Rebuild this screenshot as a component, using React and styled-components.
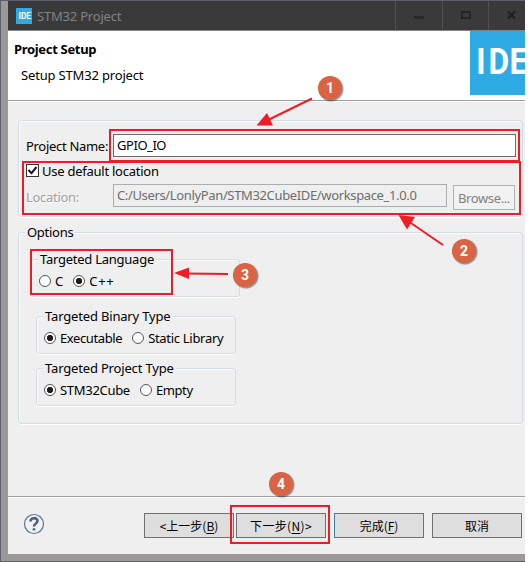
import React from 'react';
import styled, { createGlobalStyle } from 'styled-components';

const Global = createGlobalStyle`
  * { box-sizing: border-box; }
  body { margin: 0; background: #fff; }
`;

const Window = styled.main`
  position: relative;
  width: 525px;
  height: 562px;
  overflow: hidden;
  display: flex;
  flex-direction: column;
  background: #efefef;
  border: solid #5d606a;
  border-width: 1px 0 1px 1px;
  font: 13px/18px 'Noto Sans', 'Noto Sans CJK SC', sans-serif;
  color: #000;
`;

const Frame = styled.div`
  flex: 1;
  display: flex;
  flex-direction: column;
  border: solid #9b9898;
  border-width: 0 0 7px 7px;
`;

const TitleBar = styled.header`
  height: 30px;
  display: flex;
  align-items: center;
  background: #3a3a3a;
  border-bottom: 1px solid #838383;
  padding-left: 8px;
`;

const Text = styled.span`
  display: block;
  white-space: pre;
  flex: none;
  letter-spacing: ${(p) => p.$track || 0}px;
`;

const Title = styled(Text)`
  flex: 1;
  margin-left: 5px;
  color: #828282;
`;

const WindowControl = styled.div`
  width: ${(p) => p.$w}px;
  height: 29px;
  flex: none;
  border-left: 1px solid #4d5054;
  svg { display: block; }
`;

const Banner = styled.section`
  height: 70px;
  display: flex;
  justify-content: space-between;
  background: #fff;
  border-bottom: 1px solid #a0a0a0;
  box-shadow: 0 1px #fff;
`;

const BannerText = styled.div`
  padding: 9px 0 0 6px;
`;

const Heading = styled.h1`
  margin: 0 0 8px;
  font-size: 13px;
  line-height: 18px;
  font-weight: 700;
  letter-spacing: ${(p) => p.$track}px;
`;

const Subheading = styled(Text)`
  margin-left: 7px;
`;

const Body = styled.section`
  height: 395px;
  padding: 19px 1px 0 10px;
`;

const Group = styled.div`
  position: relative;
  width: ${(p) => p.$w}px;
  height: ${(p) => p.$h}px;
  margin: ${(p) => p.$m || '0'};
  padding: ${(p) => p.$p || '0'};
  border: 1px solid #d3dde3;
  border-radius: 3px;
  box-shadow: 0 1px #fff, inset 1px 1px #fafafa;
`;

const Legend = styled(Text)`
  position: absolute;
  top: -10px;
  left: 6px;
  padding: 0 2px;
  background: #efefef;
`;

const Row = styled.div`
  display: flex;
  height: ${(p) => p.$h}px;
  align-items: center;
`;

const Cell = styled.div`
  width: 87px;
  flex: none;
  padding-top: ${(p) => p.$drop || 0}px;
`;

const Field = styled.div`
  width: ${(p) => p.$w}px;
  height: 23px;
  padding: 1px 0 0 3px;
  border: 1px solid ${(p) => (p.$off ? '#abaeb0' : '#6b6b6b')};
  background: ${(p) => (p.$off ? '#efefef' : '#fff')};
  color: ${(p) => (p.$off ? '#6d6d6d' : '#000')};
`;

const Disabled = styled(Text)`
  color: #a0a0a0;
  text-shadow: 1px 1px #fff;
`;

const BrowseButton = styled.div`
  width: 62px;
  height: 25px;
  margin: 4px 0 0 6px;
  padding: 3px 0 0 4px;
  border: 1px solid #b0b3b4;
  background: #f2f2f2;
  color: #838383;
`;

const Check = styled.div`
  width: 13px;
  height: 13px;
  margin-right: 3px;
  border: 1px solid #333;
  background: #fff;
  svg { display: block; }
`;

const Radio = styled.div`
  width: 12px;
  height: 12px;
  flex: none;
  margin: 0 4px 0 ${(p) => p.$gap || 0}px;
  border: 1px solid #555;
  border-radius: 50%;
  background: ${(p) => (p.$on ? 'radial-gradient(circle, #1c1c1c 2.8px, #fff 3.5px)' : '#fff')};
`;

const Footer = styled.footer`
  flex: 1;
  display: flex;
  border-top: 1px solid #a0a0a0;
  box-shadow: inset 0 1px #fff;
  padding: 16px 0 0 15px;
`;

const Help = styled.svg`
  width: 22px;
  height: 22px;
  margin: 0 99px 0 0;
`;

const Button = styled.div`
  width: 90px;
  height: 25px;
  margin-right: ${(p) => p.$gap}px;
  display: flex;
  justify-content: center;
  align-items: center;
  flex: none;
  border: 1px solid ${(p) => (p.$primary ? '#3c7fb1' : '#707070')};
  background: #dedede;
  font: 12px/18px 'Noto Sans CJK SC', sans-serif;
  u { text-underline-offset: 2px; }
`;

const Overlay = styled.svg`
  position: absolute;
  left: -1px;
  top: -1px;
  pointer-events: none;
`;

const Badge = styled.div`
  position: absolute;
  left: ${(p) => p.$x - 13}px;
  top: ${(p) => p.$y - 13}px;
  width: 24px;
  height: 24px;
  border-radius: 50%;
  background: #d96343;
  box-shadow: 1px 1px 1px 0.5px rgba(0, 0, 0, 0.4);
  color: #fff;
  font: 700 14px/24px Roboto, sans-serif;
  text-align: center;
`;

const Logo = () => (
  <svg width="55" height="64" viewBox="0 0 55 64">
    <rect width="55" height="64" fill="#2eaae4" />
    <text x="7.3 21.2 45.4" y="43" transform="scale(.87 1)" fill="#fff" fontFamily="Roboto, sans-serif" fontWeight="700" fontSize="36.5">IDE</text>
  </svg>
);

const badges = [[330, 88], [464, 251], [245, 275], [281, 484]];

export default function App() {
  return (
    <Window>
      <Global />
      <Frame>
        <TitleBar>
          <svg width="16" height="16" viewBox="0 0 16 16">
            <rect width="16" height="16" fill="#2eaae4" />
            <text x="2.5" y="11" fill="#fff" fontFamily="Roboto, sans-serif" fontWeight="700" fontSize="9" textLength="12.5" lengthAdjust="spacingAndGlyphs">IDE</text>
          </svg>
          <Title $track={-0.2}>STM32 Project</Title>
          <WindowControl $w={47}>
            <svg width="46" height="29"><path d="M18 16.5h10" stroke="#292929" strokeWidth="3" /></svg>
          </WindowControl>
          <WindowControl $w={46}>
            <svg width="45" height="29"><rect x="19" y="11" width="8" height="6" fill="none" stroke="#242424" strokeWidth="2" /></svg>
          </WindowControl>
          <WindowControl $w={37}>
            <svg width="36" height="29"><path d="M19 10.5l7 7M26 10.5l-7 7" stroke="#202020" strokeWidth="2.4" /></svg>
          </WindowControl>
        </TitleBar>
        <Banner>
          <BannerText>
            <Heading $track={-0.32}>Project Setup</Heading>
            <Subheading $track={-0.17}>Setup STM32 project</Subheading>
          </BannerText>
          <Logo />
        </Banner>
        <Body>
          <Group $w={505} $h={97} $p="13px 0 0 7px">
            <Row $h={23}>
              <Cell><Text $track={-0.3}>Project Name:</Text></Cell>
              <Field $w={403}><Text $track={-0.45}>GPIO_IO</Text></Field>
            </Row>
            <Row $h={27}>
              <Check>
                <svg width="11" height="11"><path d="M1.5 5l3 3.2L9.500 2" fill="none" stroke="#1a1a1a" strokeWidth="2" /></svg>
              </Check>
              <Text $track={-0.25}>Use default location</Text>
            </Row>
            <Row $h={23}>
              <Cell $drop={3}><Disabled $track={-0.3}>Location:</Disabled></Cell>
              <Field $w={334} $off><Text $track={-0.355}>C:/Users/LonlyPan/STM32CubeIDE/workspace_1.0.0</Text></Field>
              <BrowseButton><Text $track={-0.38}>Browse...</Text></BrowseButton>
            </Row>
          </Group>
          <Group $w={505} $h={192} $m="15px 0 0" $p="26px 0 0 12px">
            <Legend $track={-0.28}>Options</Legend>
            <Group $w={209} $h={38} $p="15px 0 0 7px">
              <Legend $track={-0.25}>Targeted Language</Legend>
              <Row $h={12}>
                <Radio /><Text>C</Text>
                <Radio $gap={10} $on /><Text $track={0.7}>C++</Text>
              </Row>
            </Group>
            <Group $w={200} $h={38} $m="19px 0 0 5px" $p="15px 0 0 7px">
              <Legend $track={-0.17}>Targeted Binary Type</Legend>
              <Row $h={12}>
                <Radio $on /><Text $track={-0.4}>Executable</Text>
                <Radio $gap={10} /><Text $track={-0.3}>Static Library</Text>
              </Row>
            </Group>
            <Group $w={200} $h={38} $m="14px 0 0 5px" $p="15px 0 0 7px">
              <Legend $track={-0.17}>Targeted Project Type</Legend>
              <Row $h={12}>
                <Radio $on /><Text $track={-0.3}>STM32Cube</Text>
                <Radio $gap={10} /><Text $track={-0.4}>Empty</Text>
              </Row>
            </Group>
          </Group>
        </Body>
        <Footer>
          <Help viewBox="0 0 22 22">
            <circle cx="11" cy="11" r="9.5" fill="#f1f2f4" stroke="#627590" strokeWidth="1.2" />
            <path d="M7.5 8.5C7.5 4 14.5 4.3 14.5 8C14.5 10.5 11 10.5 11 13.5M11 15.300v2.200" fill="none" stroke="#4c6384" strokeWidth="2.6" />
          </Help>
          <Button $gap={2}><Text>&lt;上一步(<u>B</u>)</Text></Button>
          <Button $gap={8}><Text $track={0.35}>下一步(<u>N</u>)&gt;</Text></Button>
          <Button $gap={8} $primary><Text>完成(<u>F</u>)</Text></Button>
          <Button $gap={0}><Text>取消</Text></Button>
        </Footer>
      </Frame>
      <Overlay width="525" height="562" viewBox="0 0 525 562">
        <g fill="none" stroke="#ee1c24" strokeWidth="2">
          <rect x="110" y="130" width="409" height="31" />
          <rect x="23" y="162" width="497" height="52" />
          <rect x="31" y="250" width="141" height="44" />
          <rect x="231" y="506" width="98" height="37" />
          <path d="M312 98.5L266 121M443 245L408 221M228 274L186 273.5" />
        </g>
        <g fill="#ee1c24">
          <path d="M256.5 125.500L273 125.500L267 113Z" />
          <path d="M398.5 215L415 217L407 229.500Z" />
          <path d="M174 273L189 267.500V279Z" />
        </g>
      </Overlay>
      {badges.map(([x, y], i) => <Badge key={i} $x={x} $y={y}>{i + 1}</Badge>)}
    </Window>
  );
}
